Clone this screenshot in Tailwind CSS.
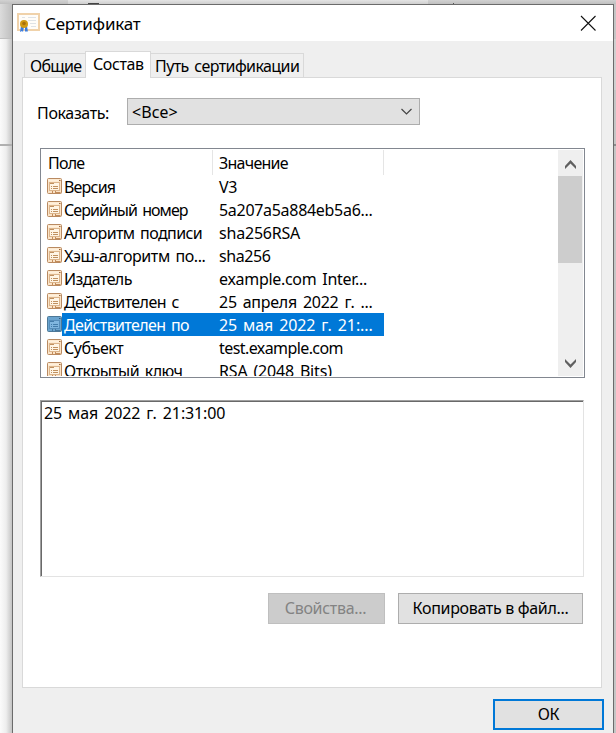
<!DOCTYPE html>
<html lang="ru">
<head>
<meta charset="utf-8">
<title>Сертификат</title>
<script src="https://cdn.jsdelivr.net/npm/@tailwindcss/browser@4"></script>
</head>
<body class="w-[616px] h-[733px] overflow-hidden bg-[#f5f5f5] text-black text-[16px] leading-[23px] font-['Noto_Sans',sans-serif] tracking-[-0.3px] [word-spacing:2px] whitespace-nowrap">
<svg class="absolute size-0"><defs>
  <symbol id="field" viewBox="0 0 16 17">
    <rect x=".5" y=".5" width="14" height="15" rx="1" fill="#fbe3c6" stroke="#b98a61"/>
    <path d="M1 2.500h11" stroke="#fff0dc" stroke-width="2"/><path d="M12 2.500h1.500" stroke="#9b6538"/>
    <rect x="2.500" y="4.500" width="10" height="8" fill="#fff5e5" stroke="#dcb58c"/>
    <path d="M3 5.500h4M4 8.500h1M6 8.500h5M4 10.500h1M6 10.500h5" stroke="#c0905f"/>
    <path d="M5.500 13v3M8.500 13v2.500M8.500 14.500h5" stroke="#c28c5b"/>
  </symbol>
  <symbol id="fieldsel" viewBox="0 0 16 17">
    <rect x=".5" y=".5" width="14" height="15" rx="1" fill="#6aa4cf" stroke="#4d7897"/>
    <path d="M12 2.500h1.500" stroke="#33597a"/>
    <rect x="2.500" y="4.500" width="10" height="8" fill="#80b6df" stroke="#568dba"/>
    <path d="M3 5.500h4M4 8.500h1M6 8.500h5M4 10.500h1M6 10.500h5" stroke="#437caa"/>
    <path d="M5.500 13v3M8.500 13v2.500M8.500 14.500h5" stroke="#47769b"/>
  </symbol>
</defs></svg>
<div class="relative flex flex-col w-[616px] h-[733px] overflow-hidden bg-[#c6c6c6]">
  <div class="absolute left-0 top-0 w-[12px] h-[38px] bg-gradient-to-r from-[#dcdcdc] to-[#bfbfbf]"></div>
  <div class="absolute left-0 top-[38px] w-[12px] h-[695px] bg-gradient-to-r from-[#fbfbfb] via-[#eeeeee] to-[#c4c4c4] border-t border-[#c0c0c0]"></div>
  <div class="absolute left-0 top-[144px] w-[12px] h-[2px] bg-[#b0b0b0]"></div>
  <div class="absolute left-0 top-0 w-[616px] h-[4px] bg-gradient-to-b from-[#d2d2d2] to-[#c0c0c0]"></div>
  <div class="absolute left-[68px] top-0 w-[360px] h-[4px] bg-gradient-to-b from-[#e4e4e4] to-[#cfcfcf]"></div>
  <div class="absolute left-[88px] top-[3px] w-[11px] h-[2px] bg-[#444]"></div>
  <div class="absolute left-[453px] top-[3px] w-[1px] h-[1px] bg-[#555]"></div>
  <div class="absolute left-[614px] top-[39px] w-[2px] h-[51px] bg-[#d0d0d0]"></div>
  <div class="absolute left-[614px] top-[144px] w-[2px] h-[2px] bg-[#8c8c8c]"></div>

  <main class="relative mt-[4px] ml-[12px] w-[602px] h-[729px] bg-[#efefef] border border-b-0 border-[#6b6b6b] flex flex-col">
    <header class="h-[36px] bg-white flex items-center pl-[4px] pr-[17px]">
      <svg class="w-[24px] h-[20px]" viewBox="0 0 24 20">
        <rect x="1" y="1" width="21" height="16" fill="#fffdf9" stroke="#f0d2aa" stroke-width="2"/>
        <path d="M11 4.500h8M11 7.500h8M5 4.500h3M13 10.500h6M14 13.500h5" stroke="#dfe3e6"/>
        <path d="M4 13l-1 6 2-1 1 1 1-5zM8 13l0 5 1 1 1-1 1 1-1-6z" fill="#3d7ddd"/>
        <circle cx="7" cy="11" r="4" fill="#d29b13"/><circle cx="7" cy="10.500" r="1.800" fill="#a8700a"/>
      </svg>
      <h1 class="ml-[4px] text-[17px] tracking-[-0.25px]">Сертификат</h1>
      <svg class="ml-auto w-[16px] h-[16px]" viewBox="0 0 16 16"><path d="M1 1l14.500 14.500M15.500 1L1 15.500" stroke="#111" stroke-width="1.100"/></svg>
    </header>
    <nav class="relative z-10 h-[36px] pl-[11px] flex items-end">
      <div class="w-[62px] h-[24px] border border-b-0 border-[#d9d9d9] pl-[5px] leading-[25px] tracking-[-0.7px]">Общие</div>
      <div class="-ml-px -mb-px w-[66px] h-[27px] border border-b-0 border-[#d9d9d9] bg-white pl-[7px] leading-[25px] tracking-[-0.4px]">Состав</div>
      <div class="-ml-px w-[154px] h-[24px] border border-b-0 border-[#d9d9d9] pl-[4px] leading-[25px] tracking-[-0.58px]">Путь сертификации</div>
    </nav>
    <section class="ml-[9px] w-[580px] h-[611px] bg-white border border-[#d9d9d9] flex flex-col">
      <div class="mt-[20px] h-[27px] flex">
        <label class="w-[104px] pl-[14px] leading-[30px] tracking-[-0.35px]">Показать:</label>
        <div class="w-[293px] h-[27px] border border-[#adadad] bg-[#e1e1e1] flex items-center pl-[4px] pr-[7px]">
          <span class="leading-[25px] mt-[2px] tracking-[0.1px]">&lt;Все&gt;</span>
          <svg class="ml-auto w-[11px] h-[7px]" viewBox="0 0 11 7"><path d="M.5 1l5 5 5-5" fill="none" stroke="#444" stroke-width="1.200"/></svg>
        </div>
      </div>
      <div class="mt-[23px] ml-[17px] w-[545px] h-[230px] border border-[#828790] bg-white p-px flex overflow-hidden">
        <div class="w-[516px] h-[226px] overflow-hidden">
          <div class="flex h-[25px] leading-[27px] tracking-[-0.75px]"><span class="w-[171px] h-[25px] pl-[6px] border-r border-[#e5e5e5]">Поле</span><span class="w-[171px] h-[25px] pl-[6px] border-r border-[#e5e5e5]">Значение</span></div>
          <div class="flex h-[23px] leading-[25px]"><svg class="ml-[5px] mt-[3px] w-[16px] h-[17px]"><use href="#field"/></svg><span class="w-[150px] pl-[1px] tracking-[-0.8px]">Версия</span><span class="w-[171px] pl-[6px]">V3</span></div>
          <div class="flex h-[23px] leading-[25px]"><svg class="ml-[5px] mt-[3px] w-[16px] h-[17px]"><use href="#field"/></svg><span class="w-[150px] pl-[1px] tracking-[-0.95px]">Серийный номер</span><span class="w-[171px] pl-[6px]">5a207a5a884eb5a6...</span></div>
          <div class="flex h-[23px] leading-[25px]"><svg class="ml-[5px] mt-[3px] w-[16px] h-[17px]"><use href="#field"/></svg><span class="w-[150px] pl-[1px] tracking-[-0.6px]">Алгоритм подписи</span><span class="w-[171px] pl-[6px] tracking-[-0.2px]">sha256RSA</span></div>
          <div class="flex h-[23px] leading-[25px]"><svg class="ml-[5px] mt-[3px] w-[16px] h-[17px]"><use href="#field"/></svg><span class="w-[150px] pl-[1px] tracking-[-0.42px]">Хэш-алгоритм по...</span><span class="w-[171px] pl-[6px] tracking-[-0.4px]">sha256</span></div>
          <div class="flex h-[23px] leading-[25px]"><svg class="ml-[5px] mt-[3px] w-[16px] h-[17px]"><use href="#field"/></svg><span class="w-[150px] pl-[1px] tracking-[-0.6px]">Издатель</span><span class="w-[171px] pl-[6px]">example.com Inter...</span></div>
          <div class="flex h-[23px] leading-[25px]"><svg class="ml-[5px] mt-[3px] w-[16px] h-[17px]"><use href="#field"/></svg><span class="w-[150px] pl-[1px] tracking-[-0.58px]">Действителен с</span><span class="w-[171px] pl-[6px] tracking-[-0.25px]">25 апреля 2022 г. ...</span></div>
          <div class="flex h-[23px] leading-[25px]"><svg class="ml-[5px] mt-[3px] w-[15px] h-[17px]"><use href="#fieldsel" width="16" height="17"/></svg><span class="w-[151px] pl-[2px] bg-[#0078d7] text-white tracking-[-0.62px]">Действителен по</span><span class="w-[171px] pl-[6px] bg-[#0078d7] text-white tracking-[-0.12px]">25 мая 2022 г. 21:...</span></div>
          <div class="flex h-[23px] leading-[25px]"><svg class="ml-[5px] mt-[3px] w-[16px] h-[17px]"><use href="#field"/></svg><span class="w-[150px] pl-[1px] tracking-[-0.45px]">Субъект</span><span class="w-[171px] pl-[6px] tracking-[-0.58px]">test.example.com</span></div>
          <div class="flex h-[23px] leading-[25px]"><svg class="ml-[5px] mt-[3px] w-[16px] h-[17px]"><use href="#field"/></svg><span class="w-[150px] pl-[1px] tracking-[-0.55px]">Открытый ключ</span><span class="w-[171px] pl-[6px] tracking-[-0.18px]">RSA (2048 Bits)</span></div>
        </div>
        <div class="w-[25px] h-[226px] bg-[#efefef] flex flex-col">
          <svg class="w-[25px] h-[26px] shrink-0" viewBox="0 0 25 26"><path d="M7 16l5.500-6 5.500 6v3l-5.500-5.500L7 19z" fill="#606060"/></svg>
          <div class="w-[24px] h-[87px] bg-[#cdcdcd]"></div>
          <svg class="mt-auto w-[25px] h-[26px] shrink-0" viewBox="0 0 25 26"><path d="M7 9v3l5.500 6 5.500-6V9l-5.500 5.500z" fill="#606060"/></svg>
        </div>
      </div>
      <div class="mt-[22px] ml-[17px] w-[544px] h-[177px] border border-t-[#a0a0a0] border-l-[#a0a0a0] border-r-[#e3e3e3] border-b-[#e3e3e3]">
        <div class="h-[175px] border-t border-l border-[#696969] pl-[2px] leading-[22px] tracking-[-0.12px]">25 мая 2022 г. 21:31:00</div>
      </div>
      <div class="mt-[16px] pr-[18px] h-[31px] flex justify-end gap-[13px]">
        <button class="w-[117px] h-[31px] bg-[#cccccc] border border-[#bfbfbf] text-[#838383] tracking-[-0.3px] pr-[2px]">Свойства...</button>
        <button class="w-[185px] h-[31px] bg-[#e1e1e1] border border-[#adadad] tracking-[-0.32px]">Копировать в файл...</button>
      </div>
    </section>
    <button class="mt-[11px] ml-[480px] w-[111px] h-[31px] shrink-0 bg-[#e1e1e1] border-2 border-[#0078d7] tracking-[-0.3px]">ОК</button>
  </main>
</div>
</body>
</html>
